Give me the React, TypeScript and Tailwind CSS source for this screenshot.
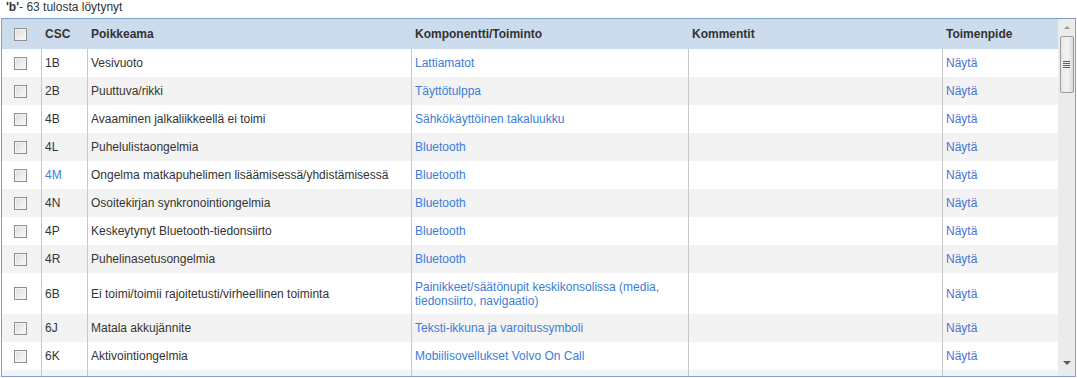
import React from "react";

type Row = {
  csc: string;
  issue: string;
  component: string;
  cscLink?: boolean;
  tall?: boolean;
};

const rows: Row[] = [
  { csc: "1B", issue: "Vesivuoto", component: "Lattiamatot" },
  { csc: "2B", issue: "Puuttuva/rikki", component: "Täyttötulppa" },
  { csc: "4B", issue: "Avaaminen jalkaliikkeellä ei toimi", component: "Sähkökäyttöinen takaluukku" },
  { csc: "4L", issue: "Puhelulistaongelmia", component: "Bluetooth" },
  { csc: "4M", issue: "Ongelma matkapuhelimen lisäämisessä/yhdistämisessä", component: "Bluetooth", cscLink: true },
  { csc: "4N", issue: "Osoitekirjan synkronointiongelmia", component: "Bluetooth" },
  { csc: "4P", issue: "Keskeytynyt Bluetooth-tiedonsiirto", component: "Bluetooth" },
  { csc: "4R", issue: "Puhelinasetusongelmia", component: "Bluetooth" },
  {
    csc: "6B",
    issue: "Ei toimi/toimii rajoitetusti/virheellinen toiminta",
    component: "Painikkeet/säätönupit keskikonsolissa (media, tiedonsiirto, navigaatio)",
    tall: true,
  },
  { csc: "6J", issue: "Matala akkujännite", component: "Teksti-ikkuna ja varoitussymboli" },
  { csc: "6K", issue: "Aktivointiongelmia", component: "Mobiilisovellukset Volvo On Call" },
];

function Checkbox() {
  return (
    <span className="block w-[13px] h-[13px] border border-[#8e8f8f] bg-gradient-to-br from-[#dcdcdc] to-[#fbfbfb] shadow-[inset_0_0_0_1px_#f4f4f4]" />
  );
}

function Scrollbar() {
  return (
    <div className="w-[17px] shrink-0 bg-[#ebebeb] flex flex-col items-center">
      <div className="h-[17px] w-full flex items-center justify-center">
        <span className="w-0 h-0 border-l-[3px] border-r-[3px] border-b-[3px] border-l-transparent border-r-transparent border-b-[#9a9a9a]" />
      </div>
      <div className="w-[14px] h-[57px] border border-[#9c9c9c] rounded-[2px] bg-gradient-to-r from-[#e6e6e6] via-[#f4f4f4] to-[#dcdcdc] flex flex-col items-center justify-center gap-[1px]">
        <span className="block w-[7px] h-[1px] bg-[#5e5e5e]" />
        <span className="block w-[7px] h-[1px] bg-[#5e5e5e]" />
        <span className="block w-[7px] h-[1px] bg-[#5e5e5e]" />
        <span className="block w-[7px] h-[1px] bg-[#5e5e5e]" />
      </div>
      <div className="flex-1" />
      <div className="h-[20px] w-full flex items-start justify-center pt-[5px]">
        <span className="w-0 h-0 border-l-[4px] border-r-[4px] border-t-[4px] border-l-transparent border-r-transparent border-t-[#5a5a5a]" />
      </div>
    </div>
  );
}

export default function App() {
  return (
    <div className="w-[1077px] h-[378px] bg-white text-[12px] text-[#333333] font-['Liberation_Sans',Arial,sans-serif] overflow-hidden">
      <div className="h-[18px] leading-[14px] pl-[6px]">
        <span className="font-bold">'b'</span>- 63 tulosta löytynyt
      </div>
      <div className="ml-[1px] w-[1075px] h-[359px] border border-[#7ba3cf] flex overflow-hidden">
        <div className="w-[1056px] shrink-0 flex flex-col">
          {/* header */}
          <div className="flex h-[30px] bg-[#cddced] font-bold items-center shrink-0">
            <div className="w-[39px] pl-[12px]">
              <Checkbox />
            </div>
            <div className="w-[46px] pl-[4px]">CSC</div>
            <div className="w-[324px] pl-[4px]">Poikkeama</div>
            <div className="w-[277px] pl-[4px]">Komponentti/Toiminto</div>
            <div className="w-[254px] pl-[4px]">Kommentit</div>
            <div className="w-[116px] pl-[4px]">Toimenpide</div>
          </div>
          {rows.map((r, i) => (
            <div
              key={r.csc}
              className={`flex shrink-0 leading-[14px] ${r.tall ? "h-[41px]" : "h-[28px]"} ${
                i % 2 === 1 ? "bg-[#f3f3f3]" : "bg-white"
              }`}
            >
              <div className="w-[39px] pl-[12px] flex items-center">
                <Checkbox />
              </div>
              <div
                className={`w-[46px] pl-[3px] border-l border-[#c8c8c8] flex items-center ${
                  r.cscLink ? "text-[#3b7dd8]" : ""
                }`}
              >
                {r.csc}
              </div>
              <div className="w-[324px] pl-[3px] border-l border-[#c8c8c8] flex items-center">{r.issue}</div>
              <div className="w-[277px] pl-[3px] pr-[4px] border-l border-[#c8c8c8] flex items-center text-[#3b7dd8]">
                {r.component}
              </div>
              <div className="w-[254px] border-l border-[#c8c8c8]" />
              <div className="w-[116px] pl-[3px] border-l border-[#c8c8c8] flex items-center text-[#4b72d6]">
                Näytä
              </div>
            </div>
          ))}
          <div className="flex h-[28px] bg-[#f3f3f3] shrink-0">
            <div className="w-[39px]" />
            <div className="w-[46px] border-l border-[#c8c8c8]" />
            <div className="w-[324px] border-l border-[#c8c8c8]" />
            <div className="w-[277px] border-l border-[#c8c8c8]" />
            <div className="w-[254px] border-l border-[#c8c8c8]" />
            <div className="w-[116px] border-l border-[#c8c8c8]" />
          </div>
        </div>
        <Scrollbar />
      </div>
    </div>
  );
}
